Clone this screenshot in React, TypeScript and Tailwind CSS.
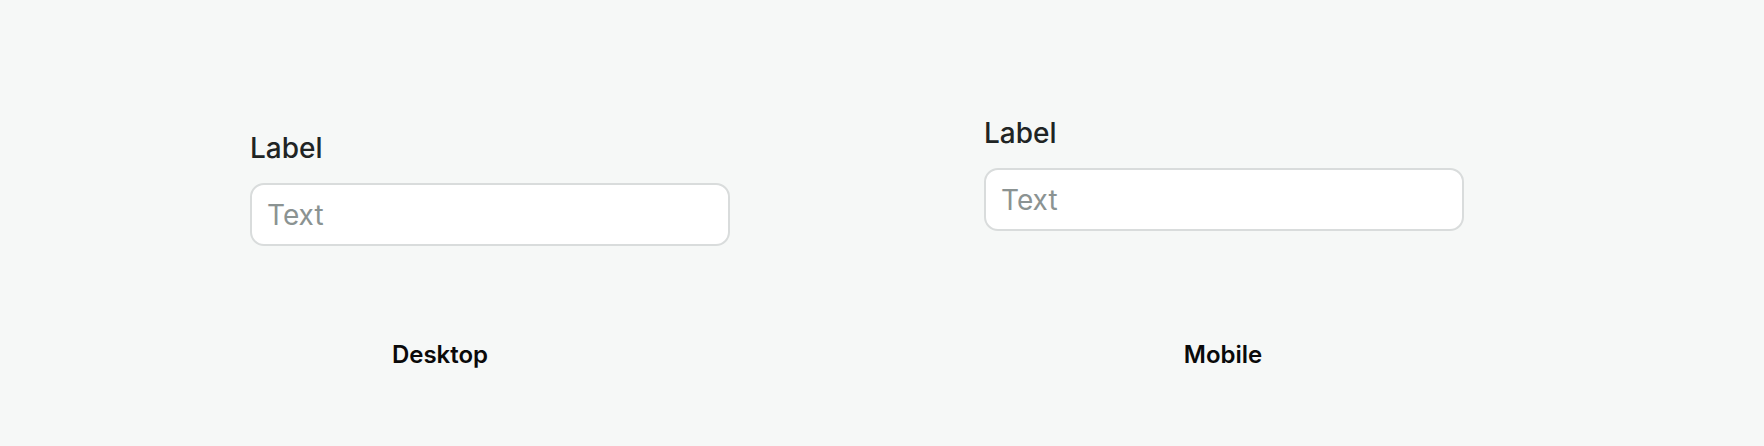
import React from "react";

function Field() {
  return (
    <div className="flex flex-col gap-[18px]">
      <label className="text-[28px] leading-[34px] font-medium text-[#202424]">Label</label>
      <div className="h-[63px] w-[480px] rounded-[14px] border-2 border-[#d9dcdc] bg-white flex items-center pl-[15px]">
        <span className="text-[28px] leading-[34px] text-[#8b9392]">Text</span>
      </div>
    </div>
  );
}

export default function App() {
  return (
    <div
      className="w-[1764px] h-[446px] bg-[#f6f8f7] pt-[116px]"
      style={{ fontFamily: "Inter, 'Noto Sans', sans-serif" }}
    >
      <div className="flex items-start">
        <div className="w-[880px] pl-[250px] pt-[15px]">
          <Field />
        </div>
        <div className="ml-[104px]">
          <Field />
        </div>
      </div>
      <div className="flex mt-[94px]">
        <div className="w-[880px] text-center text-[24px] leading-[29px] font-semibold text-[#0a0a0a]">
          Desktop
        </div>
        <div className="ml-[104px] w-[478px] text-center text-[24px] leading-[29px] font-semibold text-[#0a0a0a]">
          Mobile
        </div>
      </div>
    </div>
  );
}
